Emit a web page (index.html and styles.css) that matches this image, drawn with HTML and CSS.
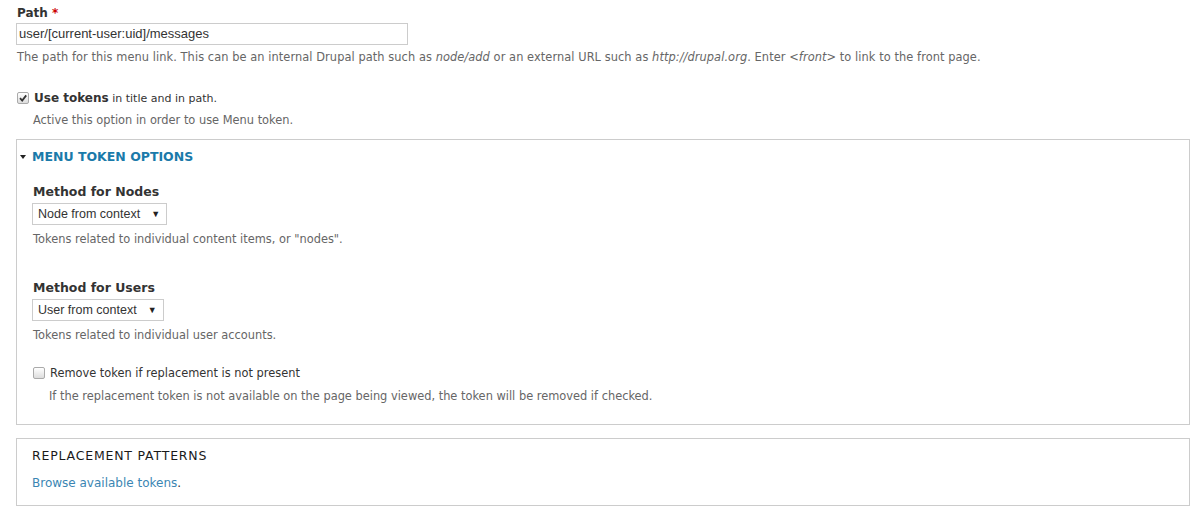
FILE: index.html
```html
<!DOCTYPE html>
<html>
<head>
<meta charset="utf-8">
<link rel="stylesheet" href="styles.css">
</head>
<body>
<div class="page">
  <div class="form-item">
    <div class="label">Path <span class="req">*</span></div>
    <div class="text-input">user/[current-user:uid]/messages</div>
    <div class="desc">The path for this menu link. This can be an internal Drupal path such as <em>node/add</em> or an external URL such as <em>http://drupal.org</em>. Enter <em>&lt;front&gt;</em> to link to the front page.</div>
  </div>

  <div class="check-row">
    <span class="cbox checked"><svg width="10" height="10" viewBox="0 0 10 10"><path d="M2 5.2 L4.2 7.6 L8.2 2.4" fill="none" stroke="#333" stroke-width="1.8"/></svg></span>
    <span class="check-label"><b>Use tokens</b> in title and in path.</span>
  </div>
  <div class="desc indent">Active this option in order to use Menu token.</div>

  <div class="fieldset options">
    <div class="legend"><span class="tri"></span>MENU TOKEN OPTIONS</div>

    <div class="sub-label first">Method for Nodes</div>
    <div class="select">Node from context <span class="arrow">▼</span></div>
    <div class="desc">Tokens related to individual content items, or "nodes".</div>

    <div class="sub-label second">Method for Users</div>
    <div class="select">User from context <span class="arrow">▼</span></div>
    <div class="desc">Tokens related to individual user accounts.</div>

    <div class="check-row inner">
      <span class="cbox"></span>
      <span class="check-label">Remove token if replacement is not present</span>
    </div>
    <div class="desc indent">If the replacement token is not available on the page being viewed, the token will be removed if checked.</div>
  </div>

  <div class="fieldset patterns">
    <div class="patterns-title">REPLACEMENT PATTERNS</div>
    <div class="browse"><a href="#">Browse available tokens</a>.</div>
  </div>
</div>
</body>
</html>
```

FILE: styles.css
```css
* { box-sizing: border-box; }
html, body { margin: 0; padding: 0; background: #fff; }
body { font-family: "DejaVu Sans", Verdana, sans-serif; color: #333; }
.page { padding: 5px 10px 0 16px; }

.label { font-size: 12px; font-weight: bold; line-height: 16px; color: #333; padding-left: 1px; }
.req { color: #c00; }

.text-input {
  margin-top: 2px;
  width: 392px; height: 22px;
  border: 1px solid #ccc;
  font-family: "Liberation Sans", Arial, sans-serif;
  font-size: 13px; line-height: 20px;
  padding: 0 2px; color: #333;
}

.desc { font-size: 11.4px; line-height: 14px; color: #666; margin-top: 5px; padding-left: 1px; }
.desc em { font-style: italic; }
.form-item .desc { letter-spacing: 0.07px; }
.desc.indent { padding-left: 17px; margin-top: 7px; }

.check-row { display: flex; align-items: center; gap: 5px; margin-top: 26px; height: 16px; padding-left: 1px; font-size: 11px; }
.check-row b { font-weight: bold; font-size: 12px; }
.cbox {
  width: 12px; height: 12px; border: 1px solid #aaa; border-radius: 2px;
  background: linear-gradient(#fff, #ddd);
  display: inline-flex; align-items: center; justify-content: center;
}
.check-label { color: #333; }

.fieldset { border: 1px solid #ccc; margin-top: 12px; padding: 9px 0 21px 15px; }
.legend { font-size: 12.5px; font-weight: bold; line-height: 16px; color: #1a7aaa; display: flex; align-items: center; margin-left: -12px; }
.tri { width: 0; height: 0; border-left: 3px solid transparent; border-right: 3px solid transparent; border-top: 4px solid #222; margin-right: 6px; margin-top: -1px; }

.sub-label { font-size: 12.5px; font-weight: bold; line-height: 16px; color: #333; padding-left: 1px; }
.sub-label.first { margin-top: 19px; }
.sub-label.second { margin-top: 34px; }
.select {
  margin-top: 3px;
  display: inline-flex; align-items: center;
  height: 22px; border: 1px solid #ccc; padding: 0 6px 0 5px;
  font-family: "Liberation Sans", Arial, sans-serif; font-size: 12.5px; color: #333;
}
.select .arrow { font-size: 9px; margin-left: 11px; color: #222; }
.fieldset .desc { margin-top: 7px; }
.check-row.inner { margin-top: 23px; font-size: 11.4px; }
.fieldset .desc.indent { margin-top: 8px; }

.patterns { padding: 9px 0 15px 15px; margin-top: 13px; }
.patterns-title { font-size: 12.5px; line-height: 16px; color: #1a1a1a; letter-spacing: 0.8px; padding-left: 0; }
.browse { font-size: 12px; line-height: 14px; margin-top: 12px; color: #333; padding-left: 0; }
.browse a { color: #3b86b3; text-decoration: none; }
```
